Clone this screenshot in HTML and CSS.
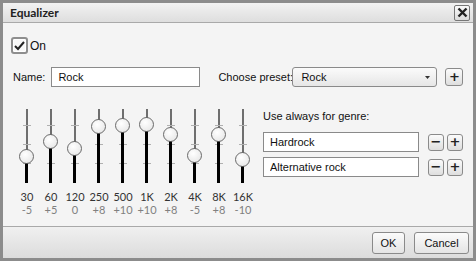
FILE: index.html
```html
<!DOCTYPE html>
<html lang="en">
<head>
    <meta charset="UTF-8">
    <title>Equalizer</title>
    <link rel="stylesheet" href="styles.css">
</head>
<body>
    <div class="window">
        <!-- title bar -->
        <div class="titlebar">
            <span class="title">Equalizer</span>
            <button class="close-btn" aria-label="Close">
                <svg width="11" height="11" viewBox="0 0 11 11"><path d="M1.5 1.5 L9.5 9.5 M9.5 1.5 L1.5 9.5" stroke="#222" stroke-width="2.4"/></svg>
            </button>
        </div>

        <div class="content">
            <label class="on-row">
                <span class="checkbox">
                    <svg width="11" height="10" viewBox="0 0 11 10"><path d="M1 5 L4 8 L10 1" stroke="#222" stroke-width="2" fill="none"/></svg>
                </span>
                On
            </label>

            <div class="name-row">
                <span class="label">Name:</span>
                <input class="text-input name-input" type="text" value="Rock">
                <span class="label preset-label">Choose preset:</span>
                <div class="select">
                    <span>Rock</span>
                    <svg width="5" height="3" viewBox="0 0 5 3"><path d="M0 0 H5 L2.5 3 Z" fill="#333"/></svg>
                </div>
                <button class="small-btn preset-add">+</button>
            </div>

            <div class="main-row">
                <div class="sliders">
                    <div class="band"><div class="track"><div class="fill" style="top:47px"></div><div class="knob" style="top:47px"></div></div><span class="freq">30</span><span class="gain">-5</span></div>
                    <div class="band"><div class="track"><div class="fill" style="top:32px"></div><div class="knob" style="top:32px"></div></div><span class="freq">60</span><span class="gain">+5</span></div>
                    <div class="band"><div class="track"><div class="fill" style="top:39px"></div><div class="knob" style="top:39px"></div></div><span class="freq">120</span><span class="gain">0</span></div>
                    <div class="band"><div class="track"><div class="fill" style="top:17px"></div><div class="knob" style="top:17px"></div></div><span class="freq">250</span><span class="gain">+8</span></div>
                    <div class="band"><div class="track"><div class="fill" style="top:16px"></div><div class="knob" style="top:16px"></div></div><span class="freq">500</span><span class="gain">+10</span></div>
                    <div class="band"><div class="track"><div class="fill" style="top:15px"></div><div class="knob" style="top:15px"></div></div><span class="freq">1K</span><span class="gain">+10</span></div>
                    <div class="band"><div class="track"><div class="fill" style="top:25px"></div><div class="knob" style="top:25px"></div></div><span class="freq">2K</span><span class="gain">+8</span></div>
                    <div class="band"><div class="track"><div class="fill" style="top:46px"></div><div class="knob" style="top:46px"></div></div><span class="freq">4K</span><span class="gain">-5</span></div>
                    <div class="band"><div class="track"><div class="fill" style="top:25px"></div><div class="knob" style="top:25px"></div></div><span class="freq">8K</span><span class="gain">+8</span></div>
                    <div class="band"><div class="track"><div class="fill" style="top:50px"></div><div class="knob" style="top:50px"></div></div><span class="freq">16K</span><span class="gain">-10</span></div>
                </div>

                <div class="genres">
                    <div class="genre-title">Use always for genre:</div>
                    <div class="genre-row">
                        <input class="text-input genre-input" type="text" value="Hardrock">
                        <button class="small-btn">&minus;</button>
                        <button class="small-btn">+</button>
                    </div>
                    <div class="genre-row">
                        <input class="text-input genre-input" type="text" value="Alternative rock">
                        <button class="small-btn">&minus;</button>
                        <button class="small-btn">+</button>
                    </div>
                </div>
            </div>
        </div>

        <div class="footer">
            <button class="btn ok-btn">OK</button>
            <button class="btn cancel-btn">Cancel</button>
        </div>
    </div>
</body>
</html>
```

FILE: styles.css
```css
/* window frame */
body {
    margin: 0;
    font-family: "Liberation Sans", Arial, sans-serif;
    font-size: 11px;
    color: #111;
}

.window {
    width: 476px;
    height: 261px;
    box-sizing: border-box;
    border: 3px solid #8c8c8c;
    display: flex;
    flex-direction: column;
    background: #f4f4f4;
}

/* title bar */
.titlebar {
    height: 19px;
    border-bottom: 1px solid #a9a9a9;
    background: linear-gradient(#f2f2f2, #dedede);
    display: flex;
    align-items: center;
    justify-content: space-between;
    padding: 0 3px 0 7px;
}

.title {
    font-family: Lato, sans-serif;
    font-weight: bold;
    font-size: 12px;
    color: #222;
}

.close-btn {
    width: 16px;
    height: 16px;
    padding: 0;
    border: 1px solid #777;
    border-radius: 2px;
    background: linear-gradient(#fafafa, #dcdcdc);
    display: flex;
    align-items: center;
    justify-content: center;
}

/* content area */
.content {
    flex: 1;
    padding: 14px 7px 0 7px;
}

.on-row {
    display: flex;
    align-items: center;
    gap: 2px;
    font-size: 12px;
    padding-left: 1px;
}

.checkbox {
    width: 13px;
    height: 13px;
    border: 2px solid #8e8e8e;
    border-radius: 3px;
    box-shadow: inset 0 0 0 1px #fff;
    background: #f8f8f8;
    display: flex;
    align-items: center;
    justify-content: center;
}

.name-row {
    display: flex;
    align-items: center;
    margin-top: 13px;
    padding-left: 3px;
    white-space: nowrap;
}

.label {
    margin-right: 6px;
}

.preset-label {
    margin-left: 18px;
    margin-right: 0;
    width: 74px;
}

.text-input {
    height: 20px;
    box-sizing: border-box;
    border: 1px solid #8a8a8a;
    background: #fff;
    font-family: inherit;
    font-size: 11px;
    padding: 0 6px;
    color: #111;
}

.name-input {
    width: 149px;
}

.select {
    width: 145px;
    flex-shrink: 0;
    height: 20px;
    box-sizing: border-box;
    border: 1px solid #8a8a8a;
    border-radius: 3px;
    background: linear-gradient(#fbfbfb, #e6e6e6);
    display: flex;
    align-items: center;
    justify-content: space-between;
    padding: 0 6px 0 8px;
}

.small-btn {
    width: 16px;
    height: 17px;
    flex-shrink: 0;
    padding: 0;
    margin-left: 8px;
    border: 1px solid #8a8a8a;
    border-radius: 3px;
    background: linear-gradient(#fbfbfb, #dedede);
    font-family: "DejaVu Sans", sans-serif;
    font-weight: bold;
    font-size: 13px;
    line-height: 14px;
    color: #222;
}

.preset-add {
    width: 18px;
    height: 18px;
}

/* sliders */
.main-row {
    display: flex;
    margin-top: 22px;
}

.sliders {
    display: flex;
    padding-left: 5px;
}

.band {
    width: 24px;
    display: flex;
    flex-direction: column;
    align-items: center;
    font-family: Lato, sans-serif;
    font-size: 11px;
}

.track {
    position: relative;
    width: 2px;
    height: 74px;
    background: #6e6e6e;
}

/* tick marks */
.track::before {
    content: "";
    position: absolute;
    left: -3px;
    top: 16px;
    width: 8px;
    height: 39px;
    background:
        linear-gradient(#b0b0b0, #b0b0b0) 0 0 / 8px 1px no-repeat,
        linear-gradient(#b0b0b0, #b0b0b0) 0 19px / 8px 1px no-repeat,
        linear-gradient(#b0b0b0, #b0b0b0) 0 38px / 8px 1px no-repeat;
}

.fill {
    position: absolute;
    left: -1px;
    width: 3px;
    bottom: 0;
    background: #000;
}

.knob {
    position: absolute;
    left: -7px;
    width: 15px;
    height: 15px;
    margin-top: -7px;
    box-sizing: border-box;
    border: 1px solid #6a6a6a;
    border-radius: 50%;
    background: radial-gradient(circle at 40% 35%, #fff, #ebebeb 70%, #d6d6d6);
}

.freq {
    margin-top: 7px;
    color: #333;
}

.gain {
    color: #808080;
}

/* genres */
.genres {
    margin-left: 8px;
    margin-top: 1px;
}

.genre-title {
    margin-bottom: 10px;
}

.genre-row {
    display: flex;
    align-items: center;
    margin-bottom: 5px;
}

.genre-input {
    width: 156px;
    margin-right: 1px;
}

.genre-row .small-btn + .small-btn {
    margin-left: 3px;
}

/* footer */
.footer {
    height: 31px;
    border-top: 1px solid #a9a9a9;
    background: linear-gradient(#f0f0f0, #dcdcdc);
    display: flex;
    justify-content: flex-end;
    align-items: center;
    gap: 9px;
    padding-right: 4px;
}

.btn {
    height: 22px;
    padding: 0;
    border: 1px solid #8a8a8a;
    border-radius: 3px;
    background: linear-gradient(#fbfbfb, #e4e4e4);
    font-family: inherit;
    font-size: 11px;
    color: #111;
}

.ok-btn {
    width: 33px;
}

.cancel-btn {
    width: 55px;
}
```
